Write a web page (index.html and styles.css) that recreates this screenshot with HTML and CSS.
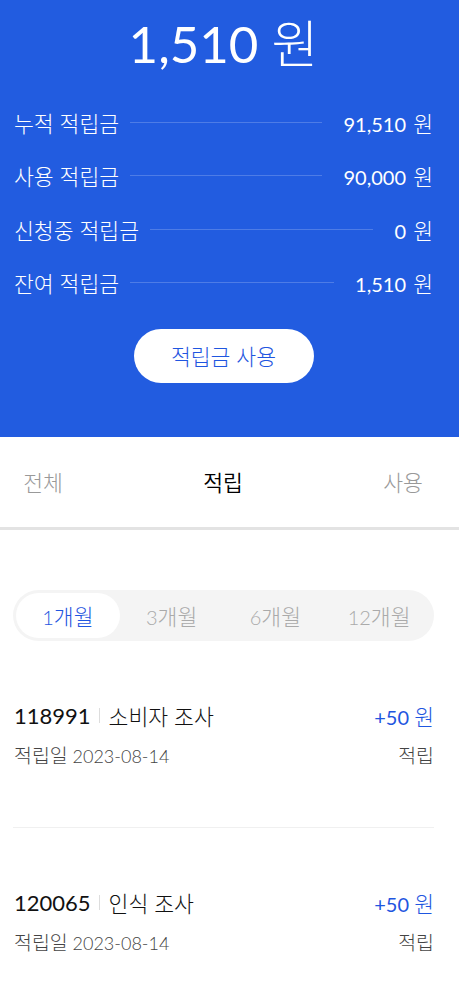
FILE: index.html
```html
<html>
  <head>
    <meta charset="utf-8" />
    <title>적립금</title>
    <link rel="stylesheet" href="styles.css">
  </head>
  <body>
    <div class="page">
      <section class="summary">
        <h1 class="balance">1,510 <span class="ko">원</span></h1>

        <ul class="summary-list">
          <li class="summary-row">
            <span class="label">누적 적립금</span>
            <span class="rule"></span>
            <span class="value">91,510 <span class="ko">원</span></span>
          </li>
          <li class="summary-row">
            <span class="label">사용 적립금</span>
            <span class="rule"></span>
            <span class="value">90,000 <span class="ko">원</span></span>
          </li>
          <li class="summary-row">
            <span class="label">신청중 적립금</span>
            <span class="rule"></span>
            <span class="value">0 <span class="ko">원</span></span>
          </li>
          <li class="summary-row">
            <span class="label">잔여 적립금</span>
            <span class="rule"></span>
            <span class="value">1,510 <span class="ko">원</span></span>
          </li>
        </ul>

        <button class="btn-use">적립금 사용</button>
      </section>

      <nav class="tabs">
        <div class="tabs-track">
          <a class="tab">전체</a>
          <a class="tab active">적립</a>
          <a class="tab">사용</a>
        </div>
      </nav>

      <div class="period">
        <button class="period-item active">1<span class="ko">개월</span></button>
        <button class="period-item">3<span class="ko">개월</span></button>
        <button class="period-item">6<span class="ko">개월</span></button>
        <button class="period-item">12<span class="ko">개월</span></button>
      </div>

      <ul class="history">
        <li class="history-item">
          <div class="history-top">
            <span class="history-title">
              <span class="code">118991</span>
              <span class="sep"></span>
              <span class="ko">소비자 조사</span>
            </span>
            <span class="amount">+50 <span class="ko">원</span></span>
          </div>
          <div class="history-bottom">
            <span><span class="ko">적립일</span> 2023-08-14</span>
            <span class="ko">적립</span>
          </div>
        </li>
        <li class="history-item">
          <div class="history-top">
            <span class="history-title">
              <span class="code">120065</span>
              <span class="sep"></span>
              <span class="ko">인식 조사</span>
            </span>
            <span class="amount">+50 <span class="ko">원</span></span>
          </div>
          <div class="history-bottom">
            <span><span class="ko">적립일</span> 2023-08-14</span>
            <span class="ko">적립</span>
          </div>
        </li>
      </ul>
    </div>
  </body>
</html>
```

FILE: styles.css
```css
:root {
  --primary: #225ce0;
  --primary-text: #1f56e0;
  --text: #111;
  --muted: #999;
  --line: #e3e3e3;
}

* {
  box-sizing: border-box;
  margin: 0;
  padding: 0;
  font-family: Lato, "Noto Sans CJK KR", sans-serif;
}

body {
  background: white;
  color: var(--text);
  overflow-x: hidden;
}

ul {
  list-style: none;
}

button {
  border: none;
  background: none;
  cursor: pointer;
}

/* 한글 글자는 라틴 숫자보다 살짝 크고 얇게 */
.ko,
.label,
.tab,
.btn-use {
  font-weight: 300;
}

.ko {
  font-size: 1.08em;
}

/* 상단 적립금 요약 */
.summary {
  background: var(--primary);
  color: white;
  padding: 14px 26px 54px 14px;
  display: flex;
  flex-direction: column;
}

.balance {
  font-size: 51px;
  font-weight: 400;
  line-height: 60px;
  text-align: center;
}

.balance .ko {
  font-size: 1em;
}

.summary-list {
  margin-top: 33px;
  display: flex;
  flex-direction: column;
  gap: 23.5px;
}

.summary-row {
  display: flex;
  align-items: center;
  height: 30px;
  font-size: 20px;
}

.summary-row .label {
  font-size: 21.6px;
}

.summary-row .rule {
  flex: 1;
  height: 1px;
  margin: 0 21px 0 11px;
  background: rgba(255, 255, 255, 0.2);
}

.summary-row .value .ko {
  margin-left: 2px;
}

.btn-use {
  align-self: center;
  margin-top: 31px;
  width: 180px;
  height: 54px;
  border-radius: 27px;
  background: white;
  color: var(--primary-text);
  font-size: 21.6px;
}

/* 탭 */
.tabs {
  overflow: hidden;
  border-bottom: 3px solid var(--line);
}

.tabs-track {
  display: flex;
  margin-left: -47px;
}

.tab {
  flex: 0 0 180px;
  height: 90px;
  display: flex;
  align-items: center;
  justify-content: center;
  font-size: 21.6px;
  color: var(--muted);
}

.tab.active {
  color: #000;
  font-weight: 350;
  position: relative;
}

.tab.active::after {
  content: "";
  position: absolute;
  left: 0;
  right: 0;
  bottom: -3px;
  height: 3px;
  background: #000;
}

/* 기간 선택 */
.period {
  margin: 60px 25px 0 13px;
  padding: 3px;
  background: #f4f4f4;
  border-radius: 26px;
  display: grid;
  grid-template-columns: repeat(4, 1fr);
}

.period-item {
  height: 45px;
  border-radius: 23px;
  font-size: 20px;
  font-weight: 300;
  color: #aaa;
}

.period-item.active {
  background: white;
  color: var(--primary-text);
}

/* 적립 내역 */
.history {
  margin: 0 25px 0 13px;
}

.history-item {
  padding: 60px 0 60px 1px;
  border-bottom: 1px solid #f0f0f0;
}

.history-top,
.history-bottom {
  display: flex;
  justify-content: space-between;
  align-items: center;
}

.history-top {
  height: 30px;
  font-size: 20px;
}

.history-title {
  display: flex;
  align-items: center;
}

.code {
  font-size: 22px;
}

.sep {
  width: 1px;
  height: 15px;
  background: #ddd;
  margin: 0 9px 0 8px;
}

.amount {
  color: var(--primary-text);
}

.history-bottom {
  margin-top: 12px;
  height: 24px;
  font-size: 18px;
  font-weight: 300;
  color: #444;
}
```
